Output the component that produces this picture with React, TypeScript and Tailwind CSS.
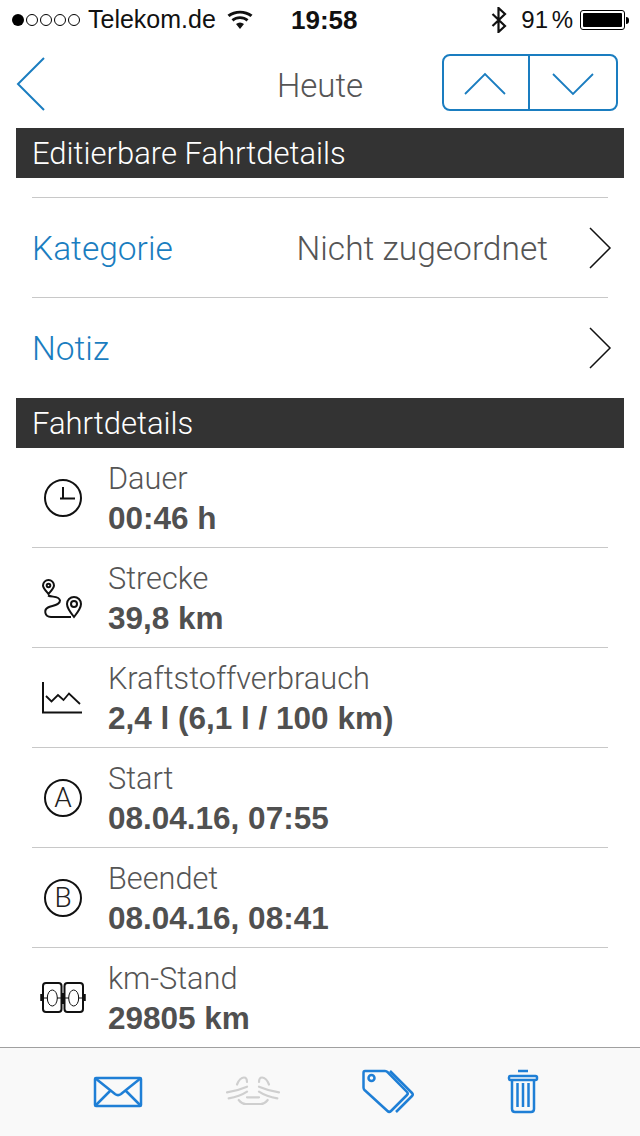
import type { ReactNode } from "react";

const BLUE = "#1a7dc0";

function ChevronRight() {
  return (
    <svg width="24" height="44" viewBox="0 0 24 44" fill="none" stroke="#111" strokeWidth="1.5">
      <path d="M2 2l20 20L2 42" />
    </svg>
  );
}

function Clock() {
  return (
    <svg width="48" height="48" viewBox="0 0 48 48" fill="none" stroke="#111" strokeWidth="2">
      <circle cx="24" cy="24" r="18" />
      <path d="M24 13v12M21 24.500h15" />
    </svg>
  );
}

function Route() {
  return (
    <svg width="48" height="48" viewBox="0 0 48 48" fill="none" stroke="#111" strokeWidth="2">
      <path d="M9.500 20c-3-3.500-5.500-6-5.500-8.500a5.500 5.500 0 0 1 11 0c0 2.500-2.500 5-5.500 8.500z" />
      <circle cx="9.500" cy="11.500" r="1.800" />
      <path d="M35 43c-4-5-7-9-7-13a7 7 0 0 1 14 0c0 4-3 8-7 13z" />
      <circle cx="35" cy="30" r="3" />
      <path d="M9 21.500c4 2 11 0 12 5 0 5-8 5-12 7-4 2-4 9 3 9.500h20" />
    </svg>
  );
}

function Chart() {
  return (
    <svg width="48" height="48" viewBox="0 0 48 48" fill="none" stroke="#111">
      <path d="M4 8v30.500h39" strokeWidth="2" />
      <path d="M7 22l5.500 5.500L19 21l5.500 5L30 19.500 41 30" strokeWidth="1.800" />
    </svg>
  );
}

function Letter({ children }: { children: ReactNode }) {
  return (
    <div className="flex h-[38px] w-[38px] items-center justify-center rounded-full border-2 border-[#111] text-[28px] font-light leading-none text-[#222]">
      {children}
    </div>
  );
}

function Odometer() {
  return (
    <svg width="48" height="48" viewBox="0 0 48 48" fill="none" stroke="#111">
      <rect x="4" y="9" width="18.500" height="29" rx="3" strokeWidth="2" />
      <rect x="25.500" y="9" width="18.500" height="29" rx="3" strokeWidth="2" />
      <path d="M2.500 20v7M45.500 20v7M24 19v11" strokeWidth="2.500" />
      <ellipse cx="13.300" cy="24" rx="5" ry="8" strokeWidth="1" />
      <ellipse cx="34.700" cy="24" rx="5" ry="8" strokeWidth="1" />
      <path d="M4 24h5M18 24h12M39 24h5" strokeWidth="1" />
    </svg>
  );
}

function Mail() {
  return (
    <svg width="50" height="32" viewBox="0 0 50 32" fill="none" stroke="#1f7fd6" strokeWidth="2.500" strokeLinejoin="round">
      <rect x="2" y="2" width="46" height="28" rx="1" />
      <path d="M2 2l20 16c2 1.500 4 1.500 6 0L48 2M2 30l15-15M48 30L33 15" />
    </svg>
  );
}

function Handshake() {
  const half = (
    <>
      <path d="M11 8.500c2-5 5-7 7-7 2 0 3 1.500 3 4.500" />
      <path d="M1 16.300c7-1 14-3 20-5.600M2.700 22.300c7-1 13-3 18.300-6.600" />
    </>
  );
  return (
    <svg width="54" height="32" viewBox="0 0 54 32" fill="none" stroke="#cfcfcf" strokeWidth="2.200" strokeLinecap="round">
      {half}
      <g transform="matrix(-1 0 0 1 54 0)">{half}</g>
      <path d="M12.700 24c2 2.500 4 4 7 4h15c3 0 5-1.500 7-4M21 21.300h12" />
    </svg>
  );
}

function Tags() {
  return (
    <svg width="52" height="46" viewBox="0 0 52 46" fill="none" stroke="#1f7fd6" strokeWidth="2.500" strokeLinejoin="round">
      <path d="M3 2h20c1 0 2 .500 3 1.500L45 23c1 1 1 2 0 3L29 42c-1 1-2.500 1-3.500 0L2.500 21c-.800-.800-1-1.500-1-2.500V4c0-1 .500-2 1.500-2z" />
      <circle cx="9.500" cy="9" r="3" />
      <path d="M28 2l22 22c1 1 1 2 0 3L34 43" />
    </svg>
  );
}

function Trash() {
  return (
    <svg width="32" height="46" viewBox="0 0 32 46" fill="none" stroke="#1f7fd6" strokeWidth="2.500" strokeLinejoin="round">
      <path d="M11 2h10" />
      <rect x="2" y="7" width="28" height="4" rx="1.500" />
      <path d="M5 11v29c0 2 1 3 3 3h16c2 0 3-1 3-3V11M10.500 14v24M16 14v24M21.500 14v24" />
    </svg>
  );
}

function DetailRow({ icon, label, value }: { icon: ReactNode; label: string; value: string }) {
  return (
    <div className="flex h-[100px] items-start border-b border-[#c8c8c8]">
      <div className="mt-[26px] mr-[14px] flex h-[48px] w-[62px] shrink-0 items-center justify-center">{icon}</div>
      <div className="pt-[12px]">
        <div className="text-[30.700px] font-light leading-[37px] text-[#555]">{label}</div>
        <div className="pt-[1px] font-['Liberation_Sans',sans-serif] text-[31.500px] font-bold leading-[41px] text-[#505050]">{value}</div>
      </div>
    </div>
  );
}

function SectionBar({ children }: { children: ReactNode }) {
  return (
    <div className="mx-[16px] flex h-[50px] items-center bg-[#333333] pl-[16px] pt-[3px] text-[31px] font-light text-white">
      {children}
    </div>
  );
}

function LinkRow({ label, value, border }: { label: string; value?: string; border?: boolean }) {
  return (
    <div className={`mx-[32px] flex h-[100px] items-center ${border ? "border-b border-[#c8c8c8]" : ""}`}>
      <span className="pt-[3px] text-[33.500px] font-light text-[#1a7dc0]">{label}</span>
      {value && <span className="ml-auto pt-[3px] text-[33.500px] font-light text-[#555]">{value}</span>}
      <span className={`${value ? "ml-[40px]" : "ml-auto"} mr-[-4px] flex items-center`}>
        <ChevronRight />
      </span>
    </div>
  );
}

export default function App() {
  return (
    <div className="flex h-[1136px] w-[640px] flex-col overflow-hidden bg-white font-['Roboto',sans-serif]">
      {/* Status bar */}
      <div className="relative flex h-[40px] shrink-0 items-center pl-[12px] pr-[11px] font-['Liberation_Sans',sans-serif] text-[25px] text-[#111]">
        <div className="flex items-center gap-[2px]">
          <span className="h-[12px] w-[12px] rounded-full bg-black" />
          {[0, 1, 2, 3].map((i) => (
            <span key={i} className="h-[12px] w-[12px] rounded-full border border-black" />
          ))}
        </div>
        <span className="ml-[8px]">Telekom.de</span>
        <svg className="ml-[11px]" width="26" height="20" viewBox="0 0 26 20" fill="#111">
          <path d="M13 19l-4-5c2.500-2 5.500-2 8 0zM6.500 11.500l-2-2.300c5-4 12-4 17 0l-2 2.300c-4-3.200-9-3.200-13 0zM2.500 7L0.500 4.800c7-5.500 18-5.500 25 0L23.500 7C17.500 2.300 8.500 2.300 2.500 7z" />
        </svg>
        <span className="absolute left-[291px] text-[26px] font-bold">19:58</span>
        <svg className="ml-auto" width="16" height="26" viewBox="0 0 16 26" fill="none" stroke="#111" strokeWidth="2.200">
          <path d="M1.500 7L14 19l-6.500 6V1L14 7 1.500 19" />
        </svg>
        <span className="ml-[14px] text-[24px] [word-spacing:-3px]">91 %</span>
        <div className="ml-[7px] flex items-center">
          <div className="h-[20px] w-[45px] rounded-[3px] border border-black p-[2px]">
            <div className="h-full w-full rounded-[1px] bg-black" />
          </div>
          <div className="ml-[1px] h-[7px] w-[3px] rounded-r-full bg-black" />
        </div>
      </div>

      {/* Nav */}
      <div className="relative flex h-[88px] shrink-0 items-center justify-center pt-[3px]">
        <svg className="absolute left-[15px] top-[16px]" width="30" height="56" viewBox="0 0 30 56" fill="none" stroke={BLUE} strokeWidth="2">
          <path d="M29 2L3 28l26 26" />
        </svg>
        <span className="text-[33px] font-light text-[#555]">Heute</span>
        <div className="absolute left-[442px] top-[14px] flex h-[57px] w-[176px] rounded-[8px] border-2 border-[#1a7dc0]">
          <div className="flex w-[86px] items-center justify-center border-r-2 border-[#1a7dc0] pr-[3px] pt-[2px]">
            <svg width="44" height="24" viewBox="0 0 44 24" fill="none" stroke={BLUE} strokeWidth="1.800">
              <path d="M2 22L22 2l20 20" />
            </svg>
          </div>
          <div className="flex flex-1 items-center justify-center pt-[2px]">
            <svg width="44" height="24" viewBox="0 0 44 24" fill="none" stroke={BLUE} strokeWidth="1.800">
              <path d="M2 2l20 20L42 2" />
            </svg>
          </div>
        </div>
      </div>

      {/* Content */}
      <div className="min-h-0 flex-1 overflow-hidden">
        <SectionBar>Editierbare Fahrtdetails</SectionBar>
        <div className="mx-[32px] mt-[19px] border-b border-[#c8c8c8]" />
        <LinkRow label="Kategorie" value="Nicht zugeordnet" border />
        <LinkRow label="Notiz" />
        <SectionBar>Fahrtdetails</SectionBar>
        <div className="mx-[32px]">
          <DetailRow icon={<Clock />} label="Dauer" value="00:46 h" />
          <DetailRow icon={<Route />} label="Strecke" value="39,8 km" />
          <DetailRow icon={<Chart />} label="Kraftstoffverbrauch" value="2,4 l (6,1 l / 100 km)" />
          <DetailRow icon={<Letter>A</Letter>} label="Start" value="08.04.16, 07:55" />
          <DetailRow icon={<Letter>B</Letter>} label="Beendet" value="08.04.16, 08:41" />
          <DetailRow icon={<Odometer />} label="km-Stand" value="29805 km" />
        </div>
      </div>

      {/* Toolbar */}
      <div className="grid h-[89px] shrink-0 grid-cols-4 items-center border-t border-[#a0a0a0] bg-[#f9f9f9] px-[50px]">
        <div className="flex justify-center"><Mail /></div>
        <div className="flex justify-center"><Handshake /></div>
        <div className="flex justify-center"><Tags /></div>
        <div className="flex justify-center"><Trash /></div>
      </div>
    </div>
  );
}
